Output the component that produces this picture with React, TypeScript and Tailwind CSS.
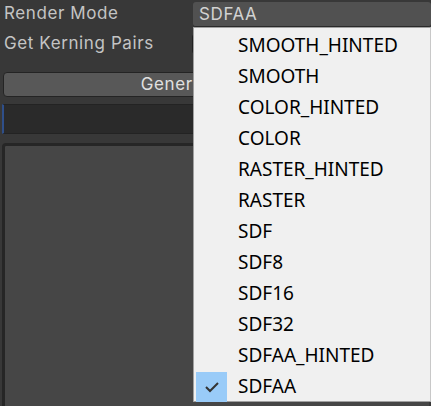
import React from "react";

const items = [
  "SMOOTH_HINTED",
  "SMOOTH",
  "COLOR_HINTED",
  "COLOR",
  "RASTER_HINTED",
  "RASTER",
  "SDF",
  "SDF8",
  "SDF16",
  "SDF32",
  "SDFAA_HINTED",
  "SDFAA",
];

export default function App() {
  return (
    <div
      className="relative w-[431px] h-[406px] overflow-hidden bg-[#383838] text-[#c4c4c4]"
      style={{ fontFamily: "Inter, 'Noto Sans', sans-serif" }}
    >
      <div className="flex flex-col">
        <div className="flex items-center h-[27px] pt-[1px]">
          <div className="w-[193px] pl-[4px] text-[17px] tracking-[0.6px]">Render Mode</div>
          <div className="flex-1 h-[25px] bg-[#515151] rounded-[3px] border-b border-[#2a2a2a] pl-[6px] text-[17px] tracking-[0.6px] leading-[24px] text-[#d2d2d2]">
            SDFAA
          </div>
        </div>
        <div className="flex items-center h-[34px]">
          <div className="w-[192px] pl-[4px] text-[17px] tracking-[0.6px]">Get Kerning Pairs</div>
          <div className="w-[20px] h-[20px] bg-[#2a2a2a] rounded-[3px] border border-[#212121]" />
        </div>
        <div className="mt-[11px] mx-[3px] h-[25px] bg-[#585858] rounded-[4px] border border-[#242424] flex items-center justify-center pl-[20px] text-[17px] tracking-[0.6px] text-[#e0e0e0]">
          Generate Font Atlas
        </div>
        <div className="mt-[7px] mx-[2px] h-[30px] bg-[#2a2a2a] border border-[#232323] border-l-[2px] border-l-[#2f4f8a]" />
        <div className="mt-[9px] mx-[2px] h-[270px] bg-[#464646] rounded-tl-[4px] border-t-[3px] border-l-[3px] border-[#262626]" />
      </div>

      <div
        className="absolute left-[193px] top-[27px] w-[238px] h-[375px] bg-[#f0f0f0] border border-[#a0a0a0] border-r-[#c8c8c8] pt-[2px] text-black"
        style={{ fontFamily: "'Noto Sans', 'Liberation Sans', sans-serif" }}
      >
        {items.map((it) => (
          <div key={it} className="flex items-center h-[31px]">
            <div className="w-[44px] h-full flex items-center pl-[2px]">
              {it === "SDFAA" && (
                <div className="w-[31px] h-[30px] bg-[#99cbf8] flex items-center justify-center">
                  <svg width="16" height="12" viewBox="0 0 16 12">
                    <path d="M2 6 L6 10 L14 2" fill="none" stroke="#333" strokeWidth="2" />
                  </svg>
                </div>
              )}
            </div>
            <div className="text-[19px] leading-none">{it}</div>
          </div>
        ))}
      </div>
    </div>
  );
}
